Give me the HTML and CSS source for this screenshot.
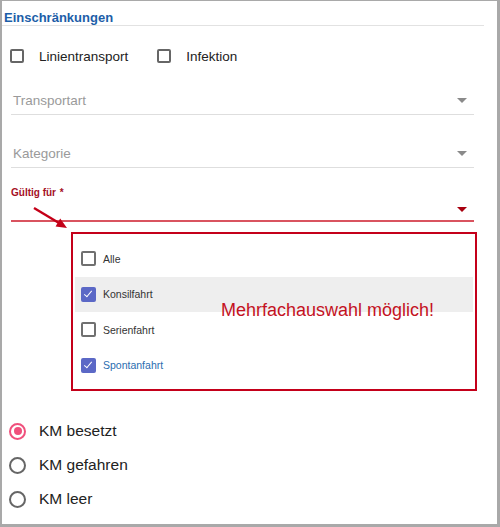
FILE: index.html
```html
<!DOCTYPE html>
<html lang="de">

<head>
    <meta charset="UTF-8">
    <meta name="viewport" content="width=device-width, initial-scale=1.0">
    <title>Einschränkungen</title>
    <link rel="stylesheet" href="styles.css">
</head>

<body>
    <div class="frame">
        <h3 class="title">Einschränkungen</h3>

        <div class="check-row">
            <label class="check-item"><span class="box"></span>Linientransport</label>
            <label class="check-item"><span class="box"></span>Infektion</label>
        </div>

        <div class="select first">
            <span class="placeholder">Transportart</span>
            <span class="caret"></span>
        </div>
        <div class="select second">
            <span class="placeholder">Kategorie</span>
            <span class="caret"></span>
        </div>

        <div class="field-label">Gültig für <span class="star">*</span></div>
        <div class="select required">
            <span class="placeholder"></span>
            <span class="caret red"></span>
        </div>

        <div class="options">
            <div class="option"><span class="mini-box"></span>Alle</div>
            <div class="option active"><span class="mini-box checked"></span>Konsilfahrt</div>
            <div class="option"><span class="mini-box"></span>Serienfahrt</div>
            <div class="option selected"><span class="mini-box checked"></span>Spontanfahrt</div>
            <div class="hint">Mehrfachauswahl möglich!</div>
        </div>

        <svg class="pointer" width="80" height="40" viewBox="0 0 80 40">
            <line x1="34" y1="7" x2="59" y2="22" stroke="#c40018" stroke-width="2.4" />
            <polygon points="67,27 55.6,25.4 60.2,17.6" fill="#c40018" />
        </svg>

        <div class="radios">
            <label class="radio-item"><span class="radio on"></span>KM besetzt</label>
            <label class="radio-item"><span class="radio"></span>KM gefahren</label>
            <label class="radio-item"><span class="radio"></span>KM leer</label>
        </div>
    </div>
</body>

</html>
```

FILE: styles.css
```css
body {
    margin: 0;
    font-family: "Liberation Sans", Arial, sans-serif;
    background-color: #fff;
}

.frame {
    position: relative;
    width: 500px;
    height: 527px;
    box-sizing: border-box;
    border-style: solid;
    border-color: #a9a9a9;
    border-width: 1px 3px 3px 2px;
    background-color: #fff;
}

.title {
    margin: 0 13px 0 0;
    padding: 9px 0 0 2px;
    font-size: 13px;
    line-height: 15px;
    font-weight: bold;
    color: #1c5ea8;
    border-bottom: 1px solid #e2e2e2;
}

.check-row {
    display: flex;
    gap: 29px;
    height: 20px;
    margin-top: 20px;
    padding-left: 8px;
}

.check-item {
    display: flex;
    align-items: center;
    gap: 15px;
    font-size: 13.5px;
    color: #222;
}

.box {
    width: 14px;
    height: 14px;
    box-sizing: border-box;
    border: 2px solid #666;
    border-radius: 2px;
}

.select {
    display: flex;
    align-items: center;
    justify-content: space-between;
    height: 28px;
    margin: 0 23px 0 9px;
    padding: 0 7px 0 2px;
    border-bottom: 1px solid #dedede;
}

.select.first {
    margin-top: 20px;
}

.select.second {
    margin-top: 24px;
}

.select.required {
    height: 21px;
    border-bottom: 2px solid #d9535f;
}

.placeholder {
    font-size: 13.5px;
    color: #9a9a9a;
}

.caret {
    width: 0;
    height: 0;
    border-left: 5px solid transparent;
    border-right: 5px solid transparent;
    border-top: 5px solid #8a8a8a;
}

.caret.red {
    border-top-color: #a8000f;
}

.field-label {
    margin: 19px 0 0 9px;
    font-size: 10px;
    line-height: 12px;
    font-weight: bold;
    color: #a50f1f;
}

.star {
    margin-left: 1px;
}

.options {
    position: relative;
    width: 406px;
    margin: 10px 0 0 69px;
    padding: 7px 2px 6px;
    box-sizing: border-box;
    border: 2px solid #c4001a;
}

.option {
    display: flex;
    align-items: center;
    gap: 7px;
    height: 35.5px;
    padding-left: 6px;
    font-size: 10.5px;
    color: #333;
}

.option.active {
    background-color: #eeeeee;
}

.option.selected {
    color: #2a6db0;
}

.mini-box {
    position: relative;
    width: 15px;
    height: 15px;
    box-sizing: border-box;
    border: 2px solid #707070;
    border-radius: 2px;
}

.mini-box.checked {
    border-color: #5b68c6;
    background-color: #5b68c6;
}

.mini-box.checked::after {
    content: "";
    position: absolute;
    left: 3px;
    top: 0px;
    width: 3px;
    height: 7px;
    border-right: 1.5px solid #fff;
    border-bottom: 1.5px solid #fff;
    transform: rotate(40deg);
}

.hint {
    position: absolute;
    left: 148px;
    top: 66px;
    font-size: 18px;
    line-height: 20px;
    color: #c4121f;
}

.pointer {
    position: absolute;
    left: -2px;
    top: 200px;
}

.radios {
    margin-top: 23px;
    padding-left: 7px;
}

.radio-item {
    display: flex;
    align-items: center;
    gap: 13px;
    height: 34px;
    font-size: 15.5px;
    color: #222;
}

.radio {
    position: relative;
    width: 17px;
    height: 17px;
    box-sizing: border-box;
    border: 2px solid #666;
    border-radius: 50%;
}

.radio.on {
    border-color: #f0507c;
}

.radio.on::after {
    content: "";
    position: absolute;
    left: 2.5px;
    top: 2.5px;
    width: 8px;
    height: 8px;
    border-radius: 50%;
    background-color: #f0507c;
}
```
